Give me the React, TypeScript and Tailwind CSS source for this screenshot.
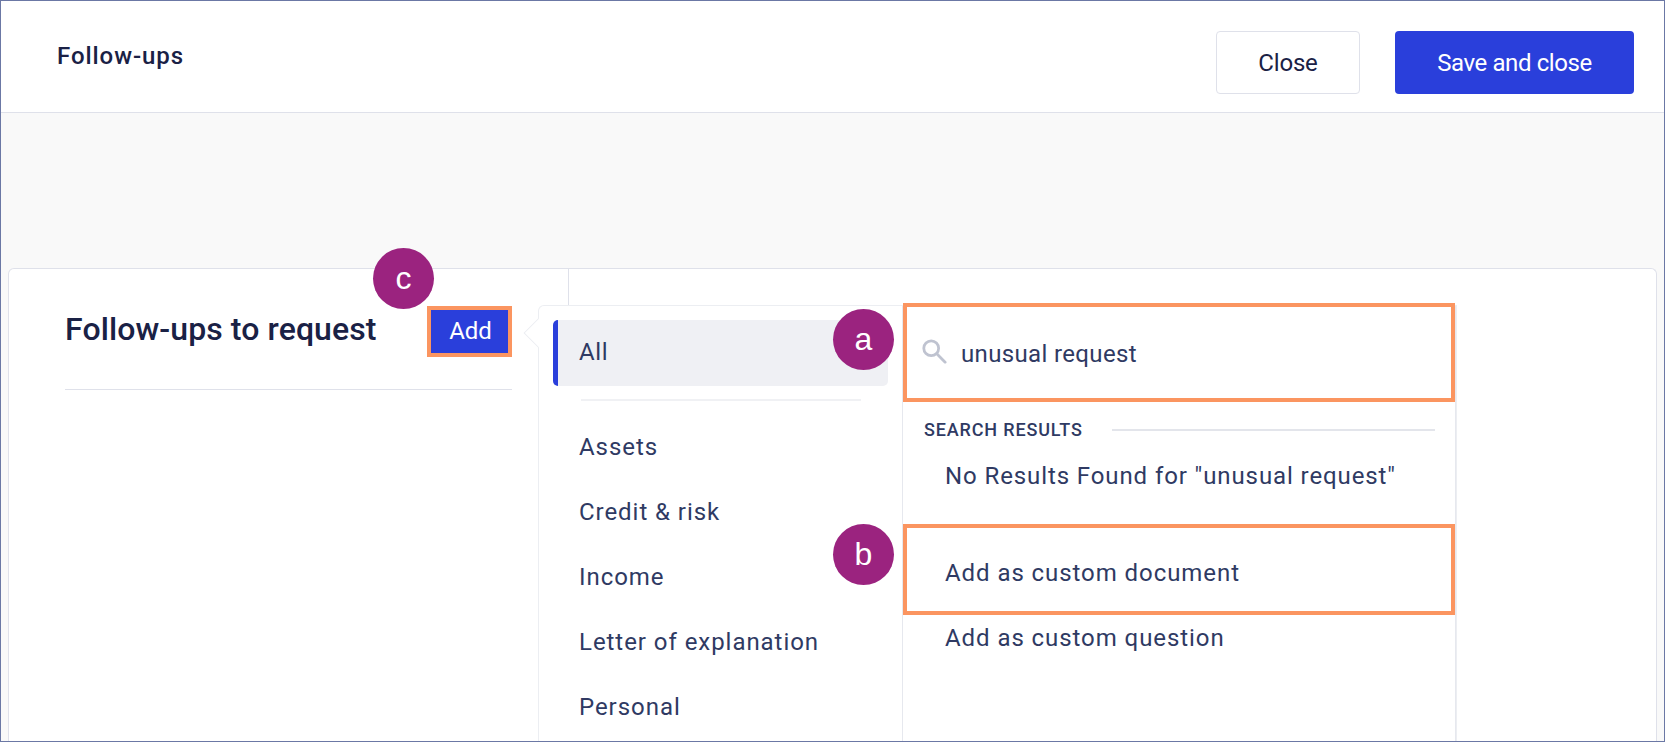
import React from 'react';

const categories = ['Assets', 'Credit & risk', 'Income', 'Letter of explanation', 'Personal'];

const Badge = ({ label, className }: { label: string; className: string }) => (
  <div className={`absolute z-20 flex h-[61px] w-[61px] items-center justify-center rounded-full bg-[#9b237f] text-[32px] leading-none text-white font-['Liberation_Sans',sans-serif] ${className}`}>
    <span className="-mt-[2px]">{label}</span>
  </div>
);

export default function App() {
  return (
    <div className="h-[742px] w-[1665px] overflow-hidden border border-[#6b78a5] bg-[#f9f9f9] font-['Roboto',sans-serif]">
      <header className="flex h-[111px] items-start justify-between border-b border-[#dfe1ea] bg-white pr-[30px] box-content">
        <h1 className="ml-[56px] mt-[39px] text-[24px] font-medium leading-[32px] tracking-[0.95px] text-[#1a2145]">Follow-ups</h1>
        <div className="mt-[30px] flex gap-[35px]">
          <button className="h-[63px] w-[144px] rounded-[4px] border border-[#dfe1ea] bg-white text-[24px] tracking-[-0.2px] text-[#1a2145]">Close</button>
          <button className="h-[63px] w-[239px] rounded-[4px] bg-[#2a3fdb] text-[24px] tracking-[-0.4px] text-white">Save and close</button>
        </div>
      </header>

      <main className="px-[7px] pt-[155px]">
        <div className="relative flex h-[500px] rounded-t-[6px] border border-b-0 border-[#dfe1ea] bg-white">
          <section className="h-full w-[560px] border-r border-[#dfe1ea] pl-[56px] pr-[56px] pt-[37px]">
            <div className="flex h-[84px] items-start justify-between border-b border-[#dfe1ea]">
              <h2 className="mt-[4px] whitespace-nowrap text-[32px] font-medium leading-[38px] tracking-[0.1px] text-[#1a2145]">Follow-ups to request</h2>
              <button className="relative h-[51px] w-[85px] border-4 border-[#fb9560] bg-[#2a3fdb] pb-[2px] pl-[2px] text-[24px] leading-none text-white">Add</button>
            </div>
          </section>

          <Badge label="c" className="left-[364px] -top-[21px]" />
          <Badge label="a" className="left-[824px] top-[40px]" />
          <Badge label="b" className="left-[824px] top-[255px]" />

          {/* add menu */}
          <div className="absolute left-[529px] top-[36px] z-10 flex h-[470px] w-[919px] rounded-tl-[6px] border border-b-0 border-[#eceef2] bg-white">
            <div className="absolute -left-[16px] top-[12px] h-[30px] w-[16px] overflow-hidden">
              <div className="ml-[5px] mt-[4px] h-[22px] w-[22px] rotate-45 border border-[#eceef2] bg-white" />
            </div>
            <nav className="w-[364px] shrink-0 border-r border-[#e6e8ee] pl-[14px] pr-[14px] pt-[14px]">
              <div className="flex h-[66px] items-center rounded-[5px] border-l-[5px] border-[#2a3fdb] bg-[#eff0f4] pb-[2px] pl-[21px] text-[24px] tracking-[0.6px] text-[#2f3a63]">All</div>
              <div className="ml-[28px] mr-[27px] mt-[13px] h-[2px] bg-[#f0f1f4]" />
              <ul className="mt-[13px] pl-[26px]">
                {categories.map((c) => (
                  <li key={c} className="flex h-[65px] items-center whitespace-nowrap text-[24px] tracking-[0.95px] text-[#2f3a63]">{c}</li>
                ))}
              </ul>
            </nav>
            <div className="flex-1 border-r border-[#e6e8ee]">
              <div className="-mt-[3px] flex h-[99px] items-center border-4 border-[#fb9560] bg-white pl-[14px]">
                <svg className="-mt-[3px]" width="26" height="26" viewBox="0 0 28 28" fill="none" stroke="#bfc3d0" strokeWidth="3">
                  <circle cx="11" cy="11" r="8" />
                  <path d="M17 17l9 9" strokeLinecap="round" />
                </svg>
                <span className="ml-[14px] pt-[2px] text-[24px] tracking-[0.35px] text-[#2f3a63]">unusual request</span>
              </div>
              <div className="mt-[18px] flex items-center pl-[21px] pr-[20px]">
                <span className="whitespace-nowrap text-[18px] font-medium leading-[20px] tracking-[0.85px] text-[#2f3a63]">SEARCH RESULTS</span>
                <div className="ml-[29px] h-[2px] flex-1 bg-[#e3e5eb]" />
              </div>
              <p className="ml-[42px] mt-[21px] whitespace-nowrap text-[24px] leading-[30px] tracking-[0.9px] text-[#2f3a63]">No Results Found for "unusual request"</p>
              <div className="mt-[33px] flex h-[91px] items-center border-4 border-[#fb9560] pl-[38px] pt-[6px] text-[24px] tracking-[0.93px] text-[#2f3a63]">Add as custom document</div>
              <div className="flex h-[46px] items-center pl-[42px] text-[24px] tracking-[0.93px] text-[#2f3a63]">Add as custom question</div>
            </div>
          </div>
        </div>
      </main>
    </div>
  );
}
